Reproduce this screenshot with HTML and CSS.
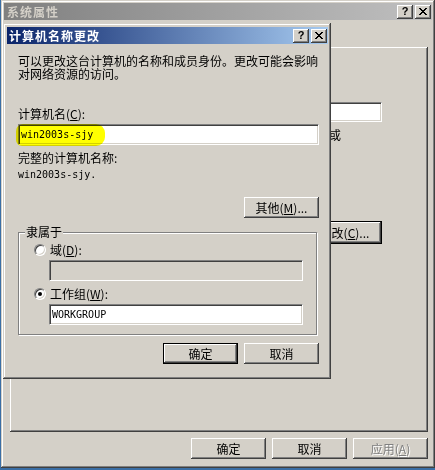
FILE: index.html
```html
<!DOCTYPE html>
<html lang="zh-CN">
<head>
  <meta charset="UTF-8">
  <title>系统属性</title>
  <link rel="stylesheet" href="styles.css">
</head>
<body>
  <!-- back window: System Properties -->
  <div class="window sysprops">
    <div class="titlebar inactive">
      <span class="title">系统属性</span>
      <div class="caption-buttons">
        <button class="cap-btn">?</button>
        <button class="cap-btn">
          <svg width="8" height="7" viewBox="0 0 8 7" shape-rendering="crispEdges"><path d="M0 0h2v1H0zM6 0h2v1H6zM1 1h2v1H1zM5 1h2v1H5zM2 2h4v1H2zM3 3h2v1H3zM2 4h4v1H2zM1 5h2v1H1zM5 5h2v1H5zM0 6h2v1H0zM6 6h2v1H6z"/></svg>
        </button>
      </div>
    </div>

    <div class="tab-panel">
      <div class="textbox desc"></div>
      <div class="hint">例如: "Kitchen Computer" 或</div>
      <button class="btn default change">更改(<u>C</u>)...</button>
    </div>

    <div class="footer">
      <button class="btn">确定</button>
      <button class="btn">取消</button>
      <button class="btn" disabled>应用(<u>A</u>)</button>
    </div>
  </div>

  <!-- front dialog: change computer name -->
  <div class="window dialog">
    <div class="titlebar active">
      <span class="title">计算机名称更改</span>
      <div class="caption-buttons">
        <button class="cap-btn">?</button>
        <button class="cap-btn">
          <svg width="8" height="7" viewBox="0 0 8 7" shape-rendering="crispEdges"><path d="M0 0h2v1H0zM6 0h2v1H6zM1 1h2v1H1zM5 1h2v1H5zM2 2h4v1H2zM3 3h2v1H3zM2 4h4v1H2zM1 5h2v1H1zM5 5h2v1H5zM0 6h2v1H0zM6 6h2v1H6z"/></svg>
        </button>
      </div>
    </div>

    <div class="dialog-body">
      <p class="intro">可以更改这台计算机的名称和成员身份。更改可能会影响对网络资源的访问。</p>

      <div class="label name-label">计算机名(<u>C</u>):</div>
      <div class="textbox name-box">
        <span class="mono">win2003s-sjy</span>
        <span class="marker"></span>
      </div>

      <div class="label full-label">完整的计算机名称:</div>
      <div class="mono full-name">win2003s-sjy.</div>

      <div class="row-right more-row">
        <button class="btn">其他(<u>M</u>)...</button>
      </div>

      <div class="group">
        <span class="group-caption">隶属于</span>
        <div class="radio-row domain-row">
          <span class="radio"></span>
          <span>域(<u>D</u>):</span>
        </div>
        <div class="textbox field disabled"></div>
        <div class="radio-row workgroup-row">
          <span class="radio checked"></span>
          <span>工作组(<u>W</u>):</span>
        </div>
        <div class="textbox field workgroup-box">
          <span class="mono">WORKGROUP</span>
        </div>
      </div>

      <div class="row-right actions">
        <button class="btn default">确定</button>
        <button class="btn">取消</button>
      </div>
    </div>
  </div>
</body>
</html>
```

FILE: styles.css
```css
* {
  box-sizing: border-box;
}

body {
  margin: 0;
  background: #3a6ea5;
  font-family: "Noto Sans CJK SC", sans-serif;
  font-size: 12px;
  line-height: 13px;
  color: #000;
}

p {
  margin: 0;
}

u {
  text-decoration: underline;
  text-underline-offset: 1px;
}

/* classic 3D window frame */
.window {
  background: #d4d0c8;
  box-shadow: inset -1px -1px #404040, inset 1px 1px #d4d0c8,
    inset -2px -2px #808080, inset 2px 2px #fff;
}

.sysprops {
  margin-left: 1px;
  width: 434px;
  height: 468px;
  padding: 3px;
  display: flex;
  flex-direction: column;
}

.dialog {
  position: absolute;
  left: 3px;
  top: 23px;
  width: 328px;
  height: 356px;
  padding: 4px 3px 3px 4px;
}

/* title bars */
.titlebar {
  height: 17px;
  display: flex;
  align-items: center;
  justify-content: space-between;
  padding: 0 1px 0 3px;
  flex-shrink: 0;
}

.titlebar .title {
  font-weight: bold;
  letter-spacing: 1px;
}

.titlebar.inactive {
  background: linear-gradient(to right, #808080, #c0c0c0);
  color: #d4d0c8;
}

.titlebar.active {
  background: linear-gradient(to right, #0a246a, #a6caf0);
  color: #fff;
  padding-left: 2px;
}

.caption-buttons {
  display: flex;
  gap: 2px;
}

.cap-btn {
  width: 16px;
  height: 14px;
  padding: 0;
  border: 0;
  background: #d4d0c8;
  box-shadow: inset -1px -1px #404040, inset 1px 1px #fff, inset -2px -2px #808080;
  display: flex;
  align-items: center;
  justify-content: center;
  font: bold 11px "Liberation Sans", sans-serif;
  color: #000;
  padding-bottom: 1px;
}

.cap-btn svg {
  display: block;
  margin-right: 1px;
}

/* generic controls */
.btn {
  width: 75px;
  height: 21px;
  padding: 0;
  border: 0;
  background: #d4d0c8;
  box-shadow: inset -1px -1px #404040, inset 1px 1px #fff, inset -2px -2px #808080;
  font-family: inherit;
  font-size: 12px;
  line-height: 13px;
  color: #000;
}

.btn.default {
  box-shadow: inset 0 0 0 1px #000, inset -2px -2px #404040,
    inset 2px 2px #fff, inset -3px -3px #808080;
}

.btn:disabled {
  color: #808080;
  text-shadow: 1px 1px #fff;
}

.textbox {
  height: 21px;
  background: #fff;
  border: 1px solid;
  border-color: #808080 #fff #fff #808080;
  box-shadow: inset 1px 1px #404040, inset -1px -1px #d4d0c8;
  display: flex;
  align-items: center;
  padding: 0 2px;
}

.textbox.disabled {
  background: #d4d0c8;
}

.mono {
  font-family: "DejaVu Sans Mono", monospace;
  font-size: 10px;
}

.row-right {
  display: flex;
  justify-content: flex-end;
  gap: 6px;
}

/* back window content */
.tab-panel {
  margin: 27px 4px 0 6px;
  height: 385px;
  box-shadow: inset -1px -1px #404040, inset 1px 1px #fff, inset -2px -2px #808080;
  display: flex;
  flex-direction: column;
}

.tab-panel .desc {
  margin: 55px 46px 0 auto;
  width: 262px;
  height: 20px;
}

.tab-panel .hint {
  margin: 6px 87px 0 0;
  text-align: right;
  white-space: nowrap;
}

.tab-panel .change {
  margin: 80px 46px 0 auto;
  height: 23px;
}

.footer {
  margin: 6px 4px 0 0;
  display: flex;
  justify-content: flex-end;
  gap: 6px;
}

/* dialog content */
.dialog-body {
  padding: 10px 9px 0 11px;
}

.name-label {
  margin-top: 27px;
}

.name-box {
  margin-top: 4px;
  position: relative;
}

/* yellow highlighter stroke over the name */
.marker {
  position: absolute;
  left: -3px;
  top: -1px;
  width: 89px;
  height: 22px;
  background: #ffff00;
  border-radius: 7px 9px 9px 6px;
  mix-blend-mode: multiply;
  filter: blur(0.6px);
}

.full-label {
  margin-top: 6px;
}

.full-name {
  margin-top: 4px;
  height: 13px;
}

.more-row {
  margin-top: 16px;
}

.group {
  position: relative;
  margin-top: 14px;
  width: 299px;
  height: 103px;
  border: 1px solid #808080;
  box-shadow: 1px 1px #fff, inset 1px 1px #fff;
  padding: 10px 0 0 15px;
}

.group-caption {
  position: absolute;
  left: 6px;
  top: -8px;
  padding: 0 1px;
  background: #d4d0c8;
}

.radio-row {
  display: flex;
  align-items: center;
  gap: 4px;
  height: 13px;
}

.radio {
  width: 12px;
  height: 12px;
  border-radius: 50%;
  background: #fff;
  border: 1px solid;
  border-color: #808080 #fff #fff #808080;
  box-shadow: inset 1px 1px #404040, inset -1px -1px #d4d0c8;
  position: relative;
}

.radio.checked::after {
  content: "";
  position: absolute;
  left: 3px;
  top: 3px;
  width: 4px;
  height: 4px;
  border-radius: 50%;
  background: #000;
}

.group .field {
  width: 254px;
  margin: 4px 0 0 15px;
}

.workgroup-row {
  margin-top: 6px;
}

.actions {
  margin-top: 8px;
}
```
